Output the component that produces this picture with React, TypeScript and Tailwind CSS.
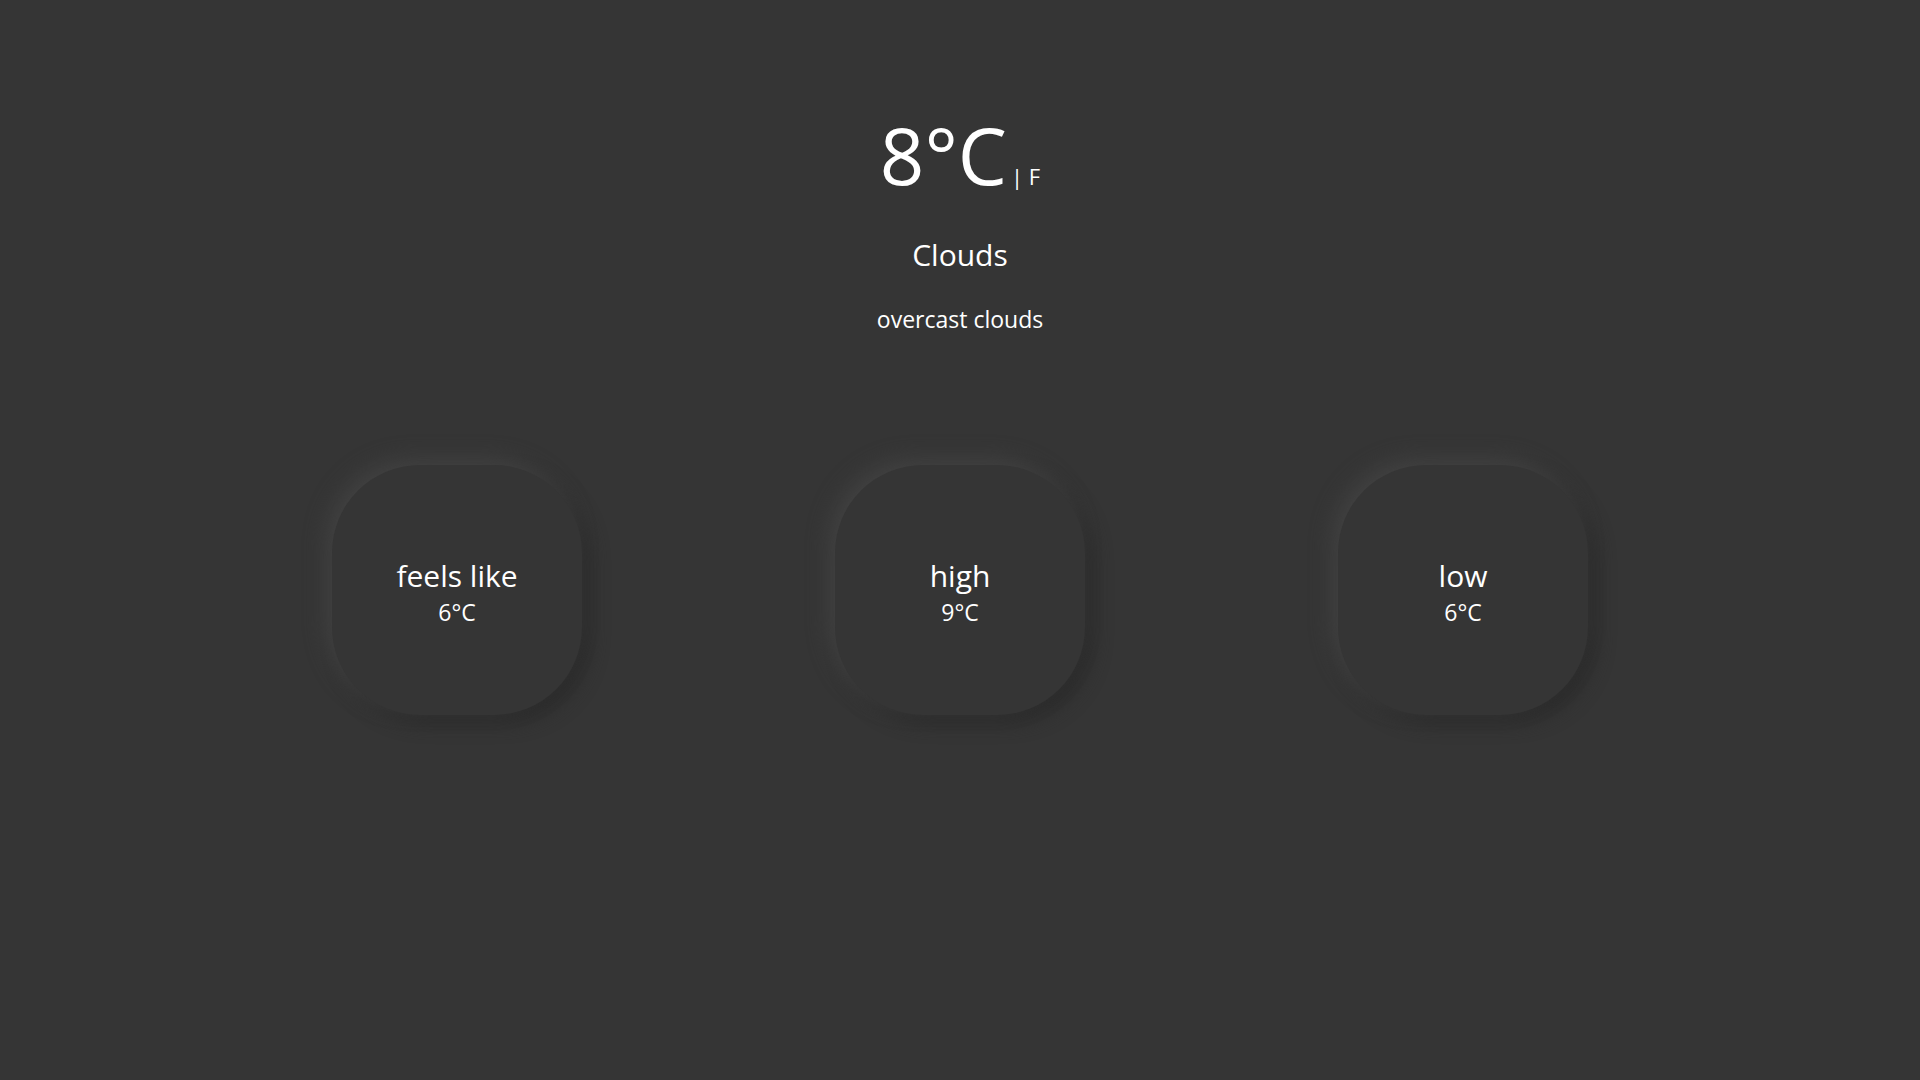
const stats = [
  { label: "feels like", value: "6°C" },
  { label: "high", value: "9°C" },
  { label: "low", value: "6°C" },
];

export default function App() {
  return (
    <main className="min-h-screen bg-[#353535] text-white font-['Open_Sans','Noto_Sans',sans-serif]">
      <div className="flex flex-col items-center pt-[116px]">
        <div className="flex items-baseline">
          <span className="text-[78px] leading-none">8°C</span>
          <span className="ml-1 text-[22px] leading-none">| F</span>
        </div>
        <p className="mt-[46px] text-[30px] leading-none">Clouds</p>
        <p className="mt-[38px] text-[23px] leading-none">overcast clouds</p>
      </div>

      <div className="mt-[134px] flex justify-center gap-[253px]">
        {stats.map((s) => (
          <div
            key={s.label}
            className="flex h-[250px] w-[250px] flex-col items-center justify-center rounded-[88px] bg-[#353535] pt-[4px] shadow-[-7px_-7px_20px_#414141,8px_8px_18px_#2a2a2a]"
          >
            <span className="text-[30px] leading-none">{s.label}</span>
            <span className="mt-[10px] text-[23px] leading-none">{s.value}</span>
          </div>
        ))}
      </div>
    </main>
  );
}
